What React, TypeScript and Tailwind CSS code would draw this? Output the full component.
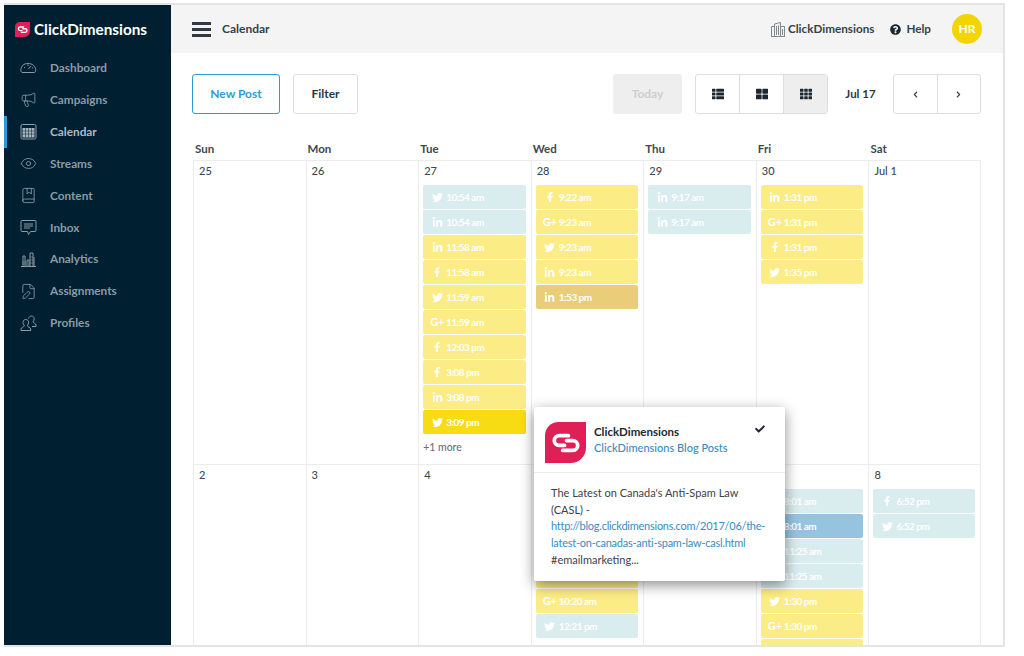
import { type ReactNode } from 'react'
import { BookMarked, Eye, FilePen, Megaphone } from 'lucide-react'
import {
  FaCheck,
  FaChevronLeft,
  FaChevronRight,
  FaFacebookF,
  FaLinkedinIn,
  FaQuestionCircle,
  FaTh,
  FaThLarge,
  FaThList,
  FaTwitter,
} from 'react-icons/fa'

type Network = 't' | 'f' | 'in' | 'g'
type Tone = 'teal' | 'yellow' | 'gold' | 'bright' | 'blue'
type Post = [Network, string, Tone]

const toneClass: Record<Tone, string> = {
  teal: 'bg-[#d9ecee]',
  yellow: 'bg-[#fbec85]',
  gold: 'bg-[#eacd78]',
  bright: 'bg-[#f7dc14]',
  blue: 'bg-[#96c4e0]',
}

const navItems: { label: string; icon: ReactNode; active?: boolean }[] = [
  { label: 'Dashboard', icon: <DashboardIcon /> },
  { label: 'Campaigns', icon: <Megaphone size={17} strokeWidth={1.2} /> },
  { label: 'Calendar', icon: <CalendarIcon />, active: true },
  { label: 'Streams', icon: <Eye size={17} strokeWidth={1.2} /> },
  { label: 'Content', icon: <BookMarked size={17} strokeWidth={1.2} /> },
  { label: 'Inbox', icon: <InboxIcon /> },
  { label: 'Analytics', icon: <AnalyticsIcon /> },
  { label: 'Assignments', icon: <FilePen size={17} strokeWidth={1.2} /> },
  { label: 'Profiles', icon: <ProfilesIcon /> },
]

const weekDays = ['Sun', 'Mon', 'Tue', 'Wed', 'Thu', 'Fri', 'Sat']

const weekOne: { day: string; posts?: Post[]; more?: string }[] = [
  { day: '25' },
  { day: '26' },
  {
    day: '27',
    posts: [
      ['t', '10:54 am', 'teal'],
      ['in', '10:54 am', 'teal'],
      ['in', '11:58 am', 'yellow'],
      ['f', '11:58 am', 'yellow'],
      ['t', '11:59 am', 'yellow'],
      ['g', '11:59 am', 'yellow'],
      ['f', '12:03 pm', 'yellow'],
      ['f', '3:08 pm', 'yellow'],
      ['in', '3:08 pm', 'yellow'],
      ['t', '3:09 pm', 'bright'],
    ],
    more: '+1 more',
  },
  {
    day: '28',
    posts: [
      ['f', '9:22 am', 'yellow'],
      ['g', '9:23 am', 'yellow'],
      ['t', '9:23 am', 'yellow'],
      ['in', '9:23 am', 'yellow'],
      ['in', '1:53 pm', 'gold'],
    ],
  },
  {
    day: '29',
    posts: [
      ['in', '9:17 am', 'teal'],
      ['in', '9:17 am', 'teal'],
    ],
  },
  {
    day: '30',
    posts: [
      ['in', '1:31 pm', 'yellow'],
      ['g', '1:31 pm', 'yellow'],
      ['f', '1:31 pm', 'yellow'],
      ['t', '1:35 pm', 'yellow'],
    ],
  },
  { day: 'Jul 1' },
]

const weekTwo: { day: string; posts?: Post[] }[] = [
  { day: '2' },
  { day: '3' },
  { day: '4' },
  {
    day: '5',
    posts: [
      ['f', '10:18 am', 'yellow'],
      ['t', '10:18 am', 'yellow'],
      ['in', '10:19 am', 'yellow'],
      ['f', '10:20 am', 'yellow'],
      ['g', '10:20 am', 'yellow'],
      ['t', '12:21 pm', 'teal'],
    ],
  },
  { day: '6' },
  {
    day: '7',
    posts: [
      ['f', '8:01 am', 'teal'],
      ['t', '8:01 am', 'blue'],
      ['in', '11:25 am', 'teal'],
      ['f', '11:25 am', 'teal'],
      ['t', '1:30 pm', 'yellow'],
      ['g', '1:30 pm', 'yellow'],
      ['in', '1:30 pm', 'yellow'],
    ],
  },
  {
    day: '8',
    posts: [
      ['f', '6:52 pm', 'teal'],
      ['t', '6:52 pm', 'teal'],
    ],
  },
]

function DashboardIcon() {
  return (
    <svg width="17" height="17" viewBox="0 0 17 17" fill="none" stroke="currentColor" strokeWidth="1">
      <path d="M2 13.500c-1.200-1-1.500-2.200-1-3.700C1.600 7 3.500 4.500 8 4.500c4.700 0 6.700 2.600 7.600 5.200.4 1.500 0 2.800-1 3.800z" />
      <path d="M8.500 10l2.500-3M4 8l1 .8M8 5.500v1.500M13 8.500l-1 .6" />
    </svg>
  )
}

function CalendarIcon() {
  return (
    <svg width="17" height="17" viewBox="0 0 17 17" fill="none">
      <rect x="1" y="1.500" width="15" height="14.500" rx="1.500" stroke="#8fa0aa" />
      <rect x="2.500" y="5" width="12" height="9.500" fill="#a9b5bc" />
      <path d="M2.500 8h12M2.500 11h12M5.500 5v9.500M8.500 5v9.500M11.500 5v9.500" stroke="#001f30" strokeWidth=".5" />
    </svg>
  )
}

function InboxIcon() {
  return (
    <svg width="17" height="17" viewBox="0 0 17 17" fill="none" stroke="currentColor" strokeWidth="1">
      <path d="M2 1.500h13a1 1 0 0 1 1 1v9a1 1 0 0 1-1 1h-4.500L8.500 15.500l-1-3H2a1 1 0 0 1-1-1v-9a1 1 0 0 1 1-1z" />
      <path d="M4 5h9M4 7h9M4 9h6" />
    </svg>
  )
}

function AnalyticsIcon() {
  return (
    <svg width="17" height="17" viewBox="0 0 17 17" fill="none" stroke="currentColor" strokeWidth="1">
      <path d="M1 15.500h15M3 15V5h2v10M7 15V9h2v6M10 15V2h3v13M14 15V6" />
      <path d="M2 11h4M2 13h4M10 6h3M10 9h3M10 12h3" strokeWidth=".6" />
    </svg>
  )
}

function ProfilesIcon() {
  return (
    <svg width="17" height="17" viewBox="0 0 17 17" fill="none" stroke="currentColor" strokeWidth="1">
      <path d="M1 15.500v-1.500c0-1.500 3.300-2 3.300-3.300C3.300 9.500 3 8.500 3 7.300 3 5.600 4.200 4.500 5.800 4.500s2.800 1.100 2.800 2.800c0 1.200-.4 2.200-1.300 3.400 0 1.300 3.400 1.800 3.400 3.300v1.500z" />
      <path d="M8.500 3.500C9 2 10 1 11.500 1 13 1 14.200 2.200 14.200 3.800c0 1.100-.4 2.100-1.200 3 0 1.200 3 1.600 3 3.200v1.500h-4" />
    </svg>
  )
}

function BuildingIcon() {
  return (
    <svg width="14" height="15" viewBox="0 0 14 15" fill="none" stroke="#7d8890" strokeWidth="1">
      <path d="M.500 14.500V4.500h3M3.500 14.500V2l6-1.500v14M9.500 4.500h4v10M0 14.500h14" />
      <path d="M5.500 4v9M7.500 3.500V13M11.500 7v6" />
    </svg>
  )
}

function LogoMark({ size }: { size: number }) {
  return (
    <svg width={size} height={size} viewBox="0 0 42 42">
      <path d="M42 0v26c0 9-7 16-16 16H0V14C0 6 6 0 14 0z" fill="#e01f56" />
      <path d="M24 14H14.500a5 5 0 0 0 0 10H20" fill="none" stroke="#fff" strokeWidth="3.800" strokeLinecap="round" />
      <path d="M22 19h6.500a5 5 0 0 1 0 10H18" fill="none" stroke="#fff" strokeWidth="3.800" strokeLinecap="round" />
    </svg>
  )
}

function NetworkIcon({ network }: { network: Network }) {
  if (network === 'g') {
    return <span className="text-[11px] font-bold tracking-[-0.2px] whitespace-nowrap">G+</span>
  }
  if (network === 't') return <FaTwitter size={11} />
  if (network === 'f') return <FaFacebookF size={10} />
  return <FaLinkedinIn size={11} />
}

function PostChip({ post }: { post: Post }) {
  const [network, time, tone] = post
  return (
    <div className={`flex h-6 items-center rounded-[2px] pl-2 text-[10px] font-bold text-white ${toneClass[tone]}`}>
      <span className="flex w-3 justify-center">
        <NetworkIcon network={network} />
      </span>
      <span className="ml-[3px] tracking-[-0.5px] whitespace-nowrap">{time}</span>
    </div>
  )
}

function DayCell({ day, posts, more, last }: { day: string; posts?: Post[]; more?: string; last?: boolean }) {
  return (
    <div className={`min-w-0 overflow-hidden border-l border-[#ececec] pr-[5px] pl-[4px] ${last ? 'border-r' : ''}`}>
      <div className="h-6 pt-[3px] pl-[1px] text-[11px] leading-[14px] font-medium text-[#3d4750]">{day}</div>
      <div className="flex flex-col gap-px">
        {posts?.map((post, i) => <PostChip key={i} post={post} />)}
      </div>
      {more && <div className="mt-[7px] text-[10.500px] leading-[12px] font-medium text-[#6a7178]">{more}</div>}
    </div>
  )
}

function Sidebar() {
  return (
    <aside className="flex w-[167px] shrink-0 flex-col bg-[#001f30]">
      <div className="flex h-[47px] shrink-0 items-center pt-px pl-[11px]">
        <LogoMark size={15} />
        <span className="ml-[4px] text-[15.300px] font-bold text-white">ClickDimensions</span>
      </div>
      <nav className="flex flex-col">
        {navItems.map(item => (
          <div
            key={item.label}
            className={`flex h-[31.900px] items-center border-l-[3px] pl-[13px] ${
              item.active ? 'border-[#2b9bd8] text-[#aebac2]' : 'border-transparent text-[#8a9ba6]'
            }`}
          >
            <span className="flex w-[17px] justify-center">{item.icon}</span>
            <span className="ml-[13px] text-[11.800px] font-bold">{item.label}</span>
          </div>
        ))}
      </nav>
    </aside>
  )
}

function Topbar() {
  return (
    <header className="flex h-[48px] shrink-0 items-center bg-[#f4f4f4] pr-[21px] pl-[21px]">
      <div className="flex w-[19px] flex-col gap-[3px]">
        <span className="h-[3px] bg-[#2f3a44]" />
        <span className="h-[3px] bg-[#2f3a44]" />
        <span className="h-[3px] bg-[#2f3a44]" />
      </div>
      <span className="ml-[11px] text-[12px] font-bold text-[#36414a]">Calendar</span>
      <div className="ml-auto flex items-center text-[11.700px] font-bold text-[#36414a]">
        <BuildingIcon />
        <span className="ml-[3px]">ClickDimensions</span>
        <FaQuestionCircle size={11} className="ml-4 text-[#1d2730]" />
        <span className="ml-[5px]">Help</span>
        <span className="ml-[21px] flex h-[30px] w-[30px] items-center justify-center rounded-full bg-[#f2d500] text-[12px] font-bold text-white">
          HR
        </span>
      </div>
    </header>
  )
}

function Toolbar() {
  return (
    <div className="flex h-10 items-stretch text-[12px] font-bold">
      <button className="w-[88px] rounded-[3px] border border-[#2e9bd6] text-[#2e9bd6]">New Post</button>
      <button className="ml-[13px] w-[65px] rounded-[3px] border border-[#dedede] text-[#2d3740]">Filter</button>
      <div className="ml-auto flex w-[69px] items-center justify-center rounded-[3px] bg-[#eeeeee] text-[#cfcfcf]">
        Today
      </div>
      <div className="ml-[13px] flex w-[133px] rounded-[3px] border border-[#dedede] text-[#1d2730]">
        <span className="flex flex-1 items-center justify-center">
          <FaThList size={12} />
        </span>
        <span className="flex flex-1 items-center justify-center border-l border-[#dedede]">
          <FaThLarge size={12} />
        </span>
        <span className="flex flex-1 items-center justify-center border-l border-[#dedede] bg-[#eeeeee]">
          <FaTh size={12} />
        </span>
      </div>
      <span className="flex w-[65px] items-center justify-center text-[11.500px] text-[#2d3740]">Jul 17</span>
      <div className="flex w-[88px] rounded-[3px] border border-[#dedede] text-[#2d3740]">
        <span className="flex flex-1 items-center justify-center">
          <FaChevronLeft size={7} />
        </span>
        <span className="flex flex-1 items-center justify-center border-l border-[#dedede]">
          <FaChevronRight size={7} />
        </span>
      </div>
    </div>
  )
}

function PostPopover() {
  return (
    <div className="absolute top-[402px] left-[363px] w-[251px] rounded-[2px] bg-white shadow-[0_4px_14px_rgba(0,0,0,0.45)]">
      <div className="relative flex h-[66px] items-center border-b border-[#ececec] pl-[11px]">
        <div className="mt-[5px]">
          <LogoMark size={41} />
        </div>
        <div className="ml-2 text-[11.500px] leading-[16px]">
          <div className="font-bold text-[#22292f]">ClickDimensions</div>
          <div className="text-[11px] font-medium text-[#3b8bbf]">ClickDimensions Blog Posts</div>
        </div>
        <FaCheck size={10} className="absolute top-[17px] right-[20px] text-[#1d2730]" />
      </div>
      <div className="h-[108px] px-[17px] pt-[12px] text-[11px] leading-[16.700px] text-[#39424a]">
        The Latest on Canada's Anti-Spam Law
        <br />
        (CASL) -
        <br />
        <span className="tracking-[-0.25px] text-[#3b8bbf]">
          http://blog.clickdimensions.com/2017/06/the-
          <br />
          latest-on-canadas-anti-spam-law-casl.html
        </span>
        <br />
        #emailmarketing...
      </div>
    </div>
  )
}

export default function App() {
  return (
    <div className="h-[656px] w-[1024px] overflow-hidden bg-white font-['Lato',sans-serif]">
      <div className="mt-[3px] ml-[4px] flex h-[644px] w-[1001px] border-t-[2px] border-r-[2px] border-b-[2px] border-[#e4e4e4]">
        <Sidebar />
        <main className="relative flex min-w-0 flex-1 flex-col overflow-hidden">
          <Topbar />
          <div className="flex min-h-0 flex-1 flex-col pt-[21px] pr-[22px] pl-[21px]">
            <Toolbar />
            <div className="mt-[28px] ml-px grid grid-cols-[repeat(7,minmax(0,1fr))] text-[11.500px] leading-[14px] font-bold text-[#3d4750]">
              {weekDays.map(d => (
                <div key={d} className="h-[18px] pl-[2px]">
                  {d}
                </div>
              ))}
            </div>
            <div className="ml-px grid h-[305px] grid-cols-[repeat(7,minmax(0,1fr))] border-y border-[#ececec]">
              {weekOne.map((cell, i) => (
                <DayCell key={cell.day} {...cell} last={i === 6} />
              ))}
            </div>
            <div className="ml-px grid min-h-0 flex-1 grid-cols-[repeat(7,minmax(0,1fr))]">
              {weekTwo.map((cell, i) => (
                <DayCell key={cell.day} {...cell} last={i === 6} />
              ))}
            </div>
          </div>
          <PostPopover />
        </main>
      </div>
    </div>
  )
}
